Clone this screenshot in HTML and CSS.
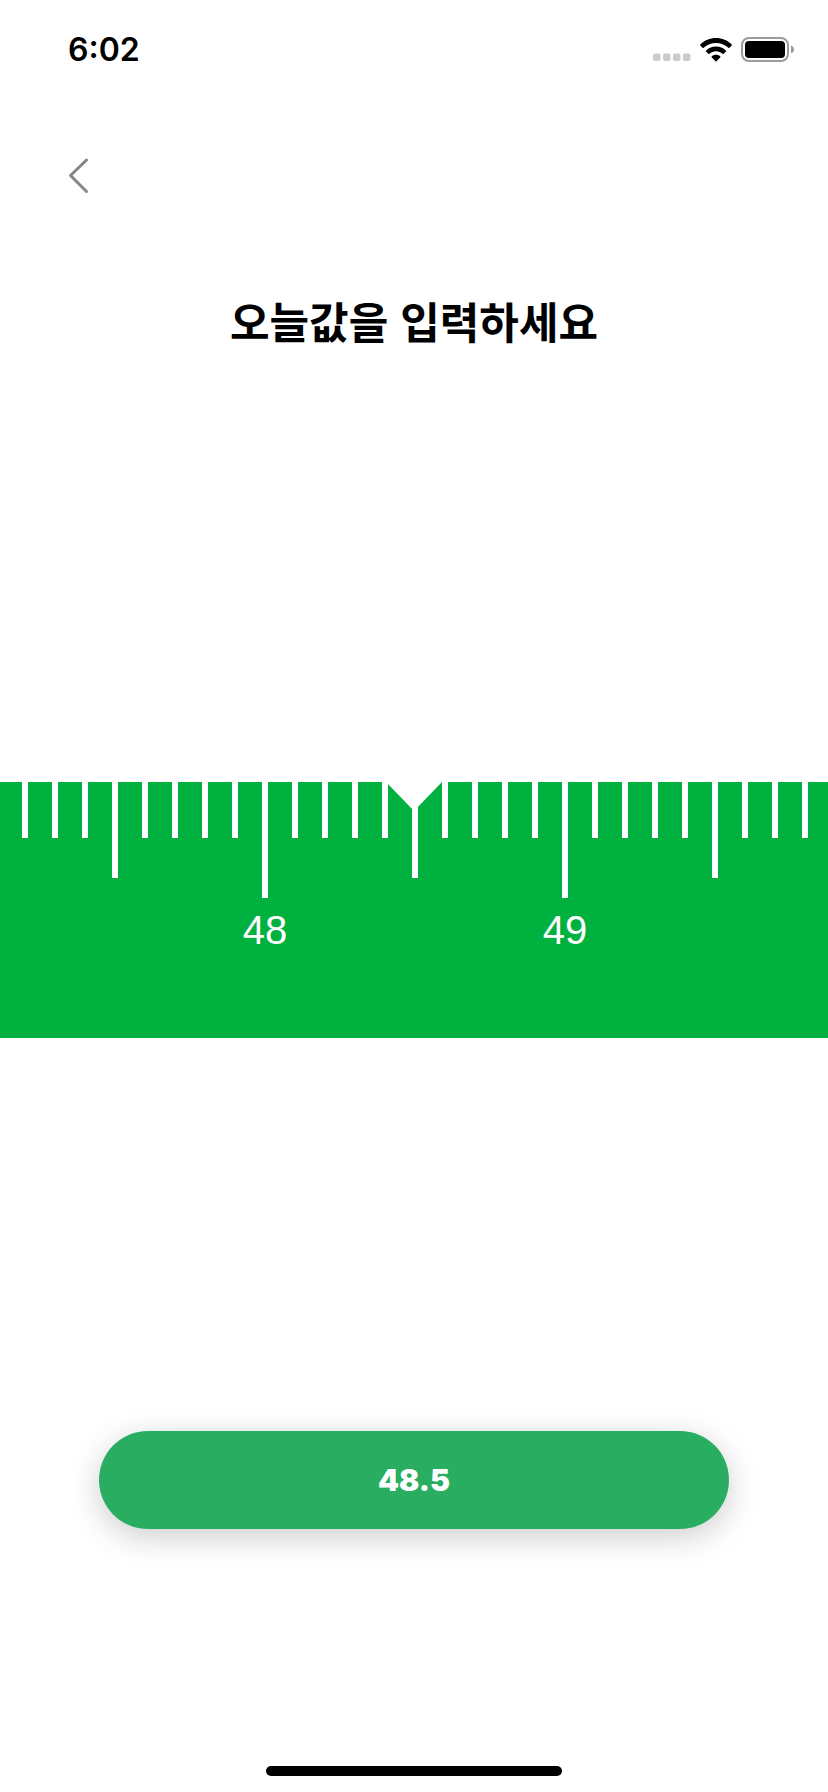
FILE: index.html
```
<!DOCTYPE html>
<html lang="ko">
<head>
<meta charset="utf-8">
<meta name="viewport" content="width=device-width, initial-scale=1">
<title>오늘값을 입력하세요</title>
<link rel="stylesheet" href="styles.css">
</head>
<body>
<div class="screen">
  <header class="status">
    <span class="time">6:02</span>
    <div class="indicators">
      <svg class="signal" width="38" height="8" viewBox="0 0 38 8" fill="#cbcbcb" aria-hidden="true"><rect x="0" y="0.5" width="7.5" height="7.5" rx="2"/><rect x="10" y="0.5" width="7.5" height="7.5" rx="2"/><rect x="20" y="0.5" width="7.5" height="7.5" rx="2"/><rect x="30" y="0.5" width="7.5" height="7.5" rx="2"/></svg>
      <svg width="32" height="24" viewBox="0 0 32 24" aria-hidden="true"><path d="M16 0C22 0 27.600 2.300 31.700 6.400C32.100 6.700 32.100 7.200 31.700 7.600L29.500 9.800C29.200 10.100 28.700 10.100 28.400 9.800C25 6.600 20.700 4.900 16 4.900S7 6.600 3.600 9.800C3.300 10.100 2.800 10.100 2.500 9.800L0.300 7.600C-0.100 7.200-0.100 6.700 0.300 6.400C4.400 2.300 10 0 16 0ZM16 8.500C19.800 8.500 23.300 9.900 25.900 12.400C26.300 12.800 26.300 13.300 25.900 13.600L23.700 15.800C23.400 16.100 22.900 16.100 22.600 15.800C20.800 14.200 18.500 13.300 16 13.300S11.200 14.200 9.400 15.800C9.100 16.100 8.600 16.100 8.300 15.800L6.100 13.600C5.700 13.300 5.700 12.800 6.100 12.400C8.700 9.900 12.200 8.500 16 8.500ZM16 16.800C17.600 16.800 19 17.300 20.200 18.300C20.600 18.600 20.600 19.100 20.200 19.500L16.500 23.200C16.200 23.500 15.800 23.500 15.500 23.200L11.800 19.500C11.400 19.100 11.400 18.600 11.800 18.300C13 17.300 14.400 16.800 16 16.800Z"/></svg>
      <svg width="53" height="26" viewBox="0 0 53 26" aria-hidden="true"><rect x="1" y="1" width="46" height="23" rx="7" fill="none" stroke="#9b9b9b" stroke-width="2"/><rect x="4" y="4" width="40" height="17" rx="4"/><path d="M50 8.500C51.900 9.200 53 10.700 53 12.500S51.900 15.800 50 16.500Z" fill="#9b9b9b"/></svg>
    </div>
  </header>
  <nav class="nav">
    <button class="back" type="button" aria-label="뒤로"><svg width="22" height="38" viewBox="0 0 22 38" fill="none" stroke="#858585" stroke-width="3" stroke-linecap="round" stroke-linejoin="round" aria-hidden="true"><path d="M18.500 3L2.500 18.500L18.500 34.500"/></svg></button>
  </nav>
  <main class="content">
    <h1 class="title"><label for="value">오늘값을 입력하세요</label></h1>
    <div class="ruler">
      <div class="scale" id="scale" aria-hidden="true"></div>
      <svg class="pointer" width="56" height="30" viewBox="0 0 56 30" fill="#fff" aria-hidden="true"><path d="M0 0H56L28 29Z"/></svg>
      <input class="range" id="value" type="range" min="40" max="60" step="0.1" value="48.5">
    </div>
    <button class="submit" id="submit" type="button">48.5</button>
  </main>
  <div class="home"></div>
</div>
<script src="script.js"></script>
</body>
</html>
```
FILE: styles.css
```
* {
  box-sizing: border-box;
}
body {
  margin: 0;
  background: #fff;
  color: #000;
  font-family: Inter, "Noto Sans CJK KR", sans-serif;
}
button {
  border: 0;
  font: inherit;
}
.screen {
  display: flex;
  flex-direction: column;
  min-height: 100vh;
}
.status {
  display: flex;
  justify-content: space-between;
  align-items: center;
  padding: 30px 34px 0 68px;
}
.time {
  font-size: 32px;
  font-weight: 600;
  line-height: 40px;
}
.indicators {
  display: flex;
  align-items: center;
  gap: 9px;
}
.signal {
  margin-top: 14px;
}
.nav {
  padding: 87px 68px 0;
}
.back {
  display: block;
  padding: 0;
  background: none;
}
.back svg {
  display: block;
}
.content {
  display: flex;
  flex-direction: column;
  align-items: center;
}
.title {
  margin: 93px 0 0;
  font-family: "Noto Sans CJK KR", sans-serif;
  font-size: 43px;
  font-weight: 700;
  line-height: 64px;
}
.ruler {
  position: relative;
  align-self: stretch;
  height: 256px;
  margin-top: 430px;
  background: #00b140;
  overflow: hidden;
}
.scale {
  display: flex;
  justify-content: center;
}
.cell {
  display: flex;
  flex: none;
  flex-direction: column;
  align-items: center;
  width: 30px;
  padding: 0 11px 0 13px;
}
.tick {
  width: 6px;
  height: 56px;
  background: #fff;
}
.tick-half {
  height: 96px;
}
.tick-whole {
  height: 116px;
}
.number {
  margin-top: 8px;
  color: #fff;
  font-family: "Liberation Sans", sans-serif;
  font-size: 40px;
  line-height: 48px;
}
.pointer {
  position: absolute;
  top: 0;
  left: calc(50% - 28px);
}
.range {
  position: absolute;
  inset: 0;
  width: 100%;
  height: 100%;
  margin: 0;
  opacity: 0;
}
.submit {
  width: 76%;
  margin-top: 393px;
  padding: 29px 0;
  border-radius: 49px;
  background: #29ae61;
  box-shadow: 0 8px 32px rgba(0, 0, 0, 0.2);
  color: #fff;
  font-size: 30px;
  font-weight: 900;
  line-height: 40px;
}
.home {
  width: 296px;
  height: 10px;
  margin: auto auto 16px;
  border-radius: 5px;
  background: #000;
}
```
FILE: script.js
```
const scale = document.getElementById("scale");
const range = document.getElementById("value");
const submit = document.getElementById("submit");

function draw() {
  const middle = Math.round(range.value * 10);
  const reach = Math.ceil(scale.clientWidth / 60);
  scale.replaceChildren();
  for (let step = middle - reach; step <= middle + reach; step++) {
    const cell = document.createElement("div");
    const tick = document.createElement("div");
    cell.className = "cell";
    tick.className = "tick";
    cell.append(tick);
    if (step % 10 === 0) {
      const number = document.createElement("span");
      number.className = "number";
      number.textContent = step / 10;
      tick.classList.add("tick-whole");
      cell.append(number);
    } else if (step % 5 === 0) {
      tick.classList.add("tick-half");
    }
    scale.append(cell);
  }
  submit.textContent = (middle / 10).toFixed(1);
}

range.addEventListener("input", draw);
window.addEventListener("resize", draw);
draw();
```
